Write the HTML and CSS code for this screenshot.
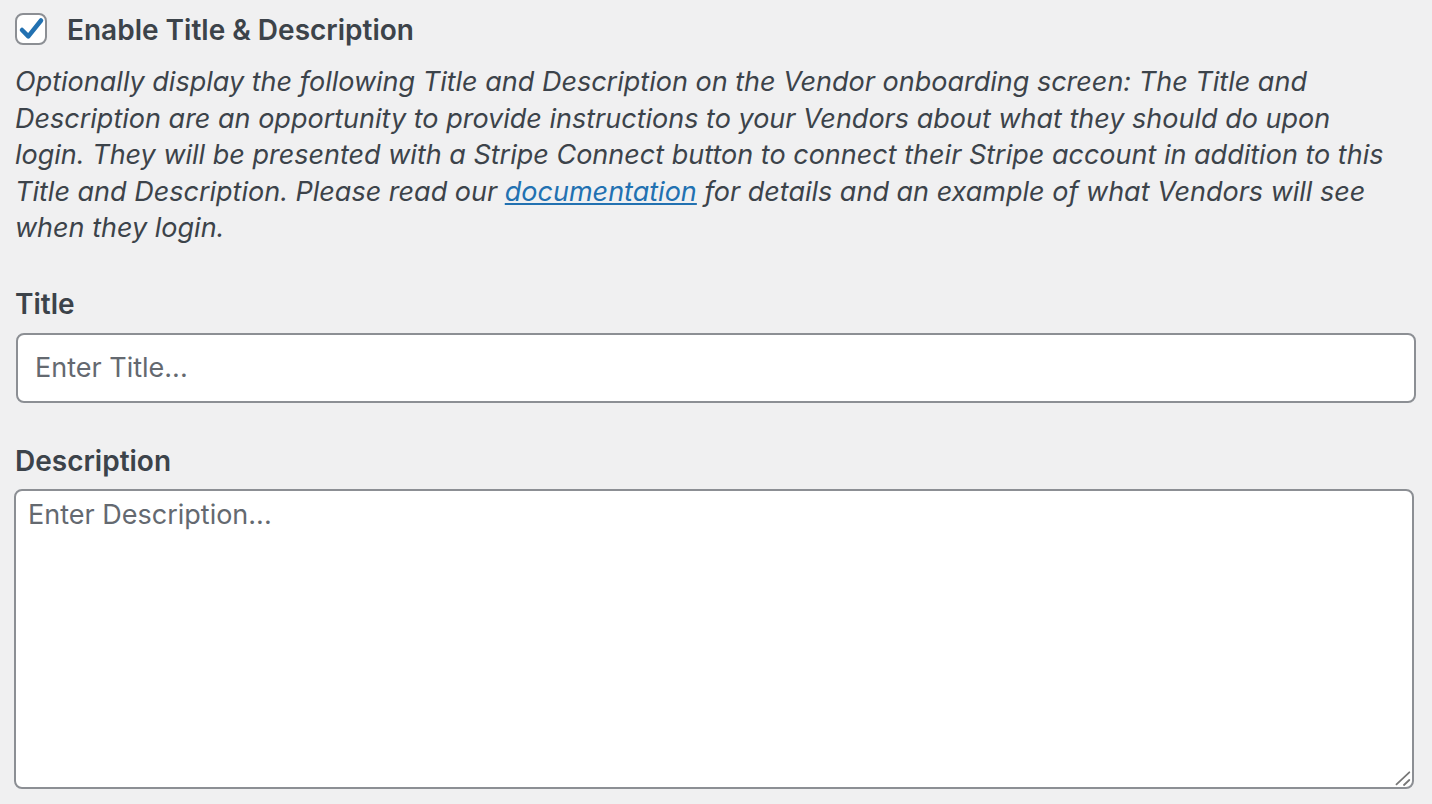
FILE: index.html
```html
<!DOCTYPE html>
<html lang="en">
<head>
<meta charset="utf-8">
<title>Vendor onboarding</title>
<link rel="stylesheet" href="styles.css">
</head>
<body>
<div class="wrap">
  <label class="check-row">
    <span class="checkbox">
      <svg viewBox="0 0 32 32" width="32" height="32" aria-hidden="true"><path d="M7 17 L13.3 23.3 L26 7.5" fill="none" stroke="#2271b1" stroke-width="4.5" stroke-linecap="round" stroke-linejoin="round"/></svg>
    </span>
    <span class="check-label">Enable Title &amp; Description</span>
  </label>
  <p class="desc">Optionally display the following Title and Description on the Vendor onboarding screen: The Title and Description are an opportunity to provide instructions to your Vendors about what they should do upon login. They will be presented with a Stripe Connect button to connect their Stripe account in addition to this Title and Description. Please read our <a href="#">documentation</a> for details and an example of what Vendors will see when they login.</p>

  <div class="field field-title">
    <div class="field-label">Title</div>
    <input class="text-input" type="text" placeholder="Enter Title...">
  </div>
  <div class="field field-desc">
    <div class="field-label">Description</div>
    <div class="area-wrap">
      <textarea class="text-area" placeholder="Enter Description..."></textarea>
      <svg class="grip" viewBox="0 0 16 16" width="16" height="16" aria-hidden="true"><path d="M1.5 14.3 L14.3 2.3 M9 15 L14.3 10" fill="none" stroke="#777" stroke-width="1.8" stroke-linecap="round"/></svg>
    </div>
  </div>
</div>
</body>
</html>
```

FILE: styles.css
```css
html, body {
  margin: 0;
  padding: 0;
  background: #f0f0f1;
}
body {
  font-family: Inter, "Noto Sans", "Liberation Sans", sans-serif;
  color: #3c434a;
  font-size: 27px;
}
.wrap {
  padding: 13px 0 0 15px;
  width: 1402px;
}
.check-row {
  display: flex;
  align-items: center;
  gap: 20px;
  height: 32px;
}
.checkbox {
  box-sizing: border-box;
  width: 32px;
  height: 32px;
  border: 2px solid #8c8f94;
  border-radius: 8px;
  background: #fff;
  display: flex;
  align-items: center;
  justify-content: center;
  flex: none;
}
.checkbox svg {
  display: block;
  flex: none;
}
.check-label {
  font-weight: 600;
  font-size: 28px;
  padding-top: 2px;
}
.desc {
  margin: 19px 0 0 0;
  max-width: 1390px;
  font-style: italic;
  font-size: 27px;
  line-height: 36.5px;
}
.desc a {
  color: #2271b1;
  text-decoration: underline;
}
.field-title {
  margin-top: 39px;
}
.field-title .field-label {
  margin-bottom: 11px;
}
.field-desc {
  margin-top: 40px;
}
.field-desc .field-label {
  margin-bottom: 10px;
}
.field-label {
  font-weight: 600;
  font-size: 28px;
  line-height: 36px;
}
.text-input, .text-area {
  box-sizing: border-box;
  display: block;
  width: 1400px;
  border: 2px solid #8c8f94;
  border-radius: 8px;
  background: #fff;
  font-family: Inter, "Noto Sans", "Liberation Sans", sans-serif;
  font-size: 27px;
  color: #2c3338;
  outline: none;
}
.text-input {
  height: 70px;
  margin-left: 1px;
  padding: 0 17px;
}
.area-wrap {
  position: relative;
  width: 1400px;
  margin-left: -1px;
}
.text-area {
  height: 300px;
  padding: 6px 12px;
  resize: none;
  line-height: 36px;
}
.grip {
  position: absolute;
  right: 3px;
  bottom: 3px;
}
.text-input::placeholder, .text-area::placeholder {
  color: #646970;
  opacity: 1;
}
```
